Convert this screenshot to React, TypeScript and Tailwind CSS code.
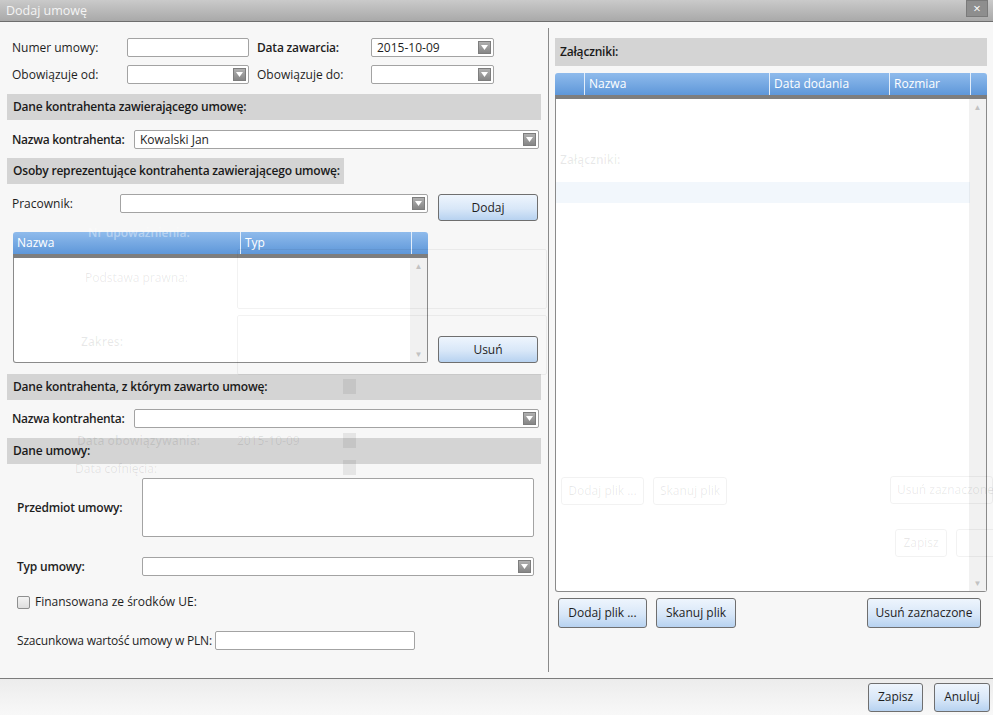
import React from 'react';

const Arrow: React.FC = () => (
  <div className="flex h-[13px] w-[13px] shrink-0 items-center justify-center border border-[#7d7d7d] bg-linear-to-b from-[#b0b0b0] to-[#868686]">
    <svg width="7" height="5" viewBox="0 0 7 5">
      <path d="M0 0 L7 0 L3.5 5 Z" fill="#ffffff" />
    </svg>
  </div>
);

const Combo: React.FC<{ className?: string; value?: string }> = ({ className = '', value = '' }) => (
  <div className={`flex h-[19px] shrink-0 items-center rounded-[2px] border border-[#a3a3a3] bg-white pl-[5px] pr-[2px] ${className}`}>
    <span className="flex-1 whitespace-nowrap text-[12px] leading-none text-[#1e1e1e]">{value}</span>
    <Arrow />
  </div>
);

const TextBox: React.FC<{ className?: string }> = ({ className = '' }) => (
  <div className={`shrink-0 rounded-[2px] border border-[#a3a3a3] bg-white ${className}`} />
);

const Btn: React.FC<{ className?: string; children: React.ReactNode }> = ({ className = '', children }) => (
  <button className={`flex shrink-0 items-center justify-center whitespace-nowrap rounded-[3px] border border-[#6f6f6f] bg-linear-to-b from-[#eef5fd] via-[#d8e7f8] via-55% to-[#b7d2f0] text-[12px] text-[#1e1e1e] ${className}`}>
    {children}
  </button>
);

const Section: React.FC<{ className?: string; children: React.ReactNode }> = ({ className = '', children }) => (
  <div className={`flex h-[26px] items-center whitespace-nowrap bg-[#d4d4d4] px-[6px] text-[12px] font-semibold tracking-[-0.2px] text-[#1a1a1a] ${className}`}>
    {children}
  </div>
);

interface Col {
  label: string;
  w: string;
}

const Grid: React.FC<{ cols: Col[]; className?: string }> = ({ cols, className = '' }) => (
  <div className={`flex flex-col ${className}`}>
    <div className="flex h-[22px] rounded-t-[3px] bg-linear-to-b from-[#8fbbec] to-[#5e97d9]">
      {cols.map((c, i) => (
        <div
          key={i}
          className={`${c.w} flex items-center border-l border-[#e3eefa] pl-[4px] text-[12px] text-white first:border-l-0 last:flex-1`}
        >
          {c.label}
        </div>
      ))}
    </div>
    <div className="h-[4px] bg-[#7e7e7e]" />
    <div className="flex flex-1 rounded-b-[3px] border border-t-0 border-[#8a8a8a] bg-white">
      <div className="flex-1" />
      <div className="flex w-[17px] flex-col items-center justify-between bg-[#f1f1f1] py-[4px] text-[8px] leading-none text-[#c2c2c2]">
        <span>▲</span>
        <span>▼</span>
      </div>
    </div>
  </div>
);

// faint image of the window lying behind this one
const Ghost: React.FC = () => (
  <div className="pointer-events-none absolute inset-0 text-[12px] text-black/[0.09]">
    <span className="absolute left-[88px] top-[224px] font-semibold text-white/40">Nr upoważnienia:</span>
    <span className="absolute left-[85px] top-[269px]">Podstawa prawna:</span>
    <span className="absolute left-[81px] top-[333px] font-semibold">Zakres:</span>
    <span className="absolute left-[77px] top-[432px] font-semibold">Data obowiązywania:</span>
    <span className="absolute left-[237px] top-[432px]">2015-10-09</span>
    <span className="absolute left-[75px] top-[460px]">Data cofnięcia:</span>
    <div className="absolute left-[343px] top-[379px] h-[15px] w-[13px] bg-black/[0.07]" />
    <div className="absolute left-[343px] top-[433px] h-[15px] w-[13px] bg-black/[0.07]" />
    <div className="absolute left-[343px] top-[460px] h-[15px] w-[13px] bg-black/[0.07]" />
    <div className="absolute left-[237px] top-[249px] h-[60px] w-[310px] rounded-[2px] border border-black/[0.05]" />
    <div className="absolute left-[237px] top-[315px] h-[60px] w-[310px] rounded-[2px] border border-black/[0.05]" />
    <span className="absolute left-[560px] top-[151px] font-semibold">Załączniki:</span>
    <div className="absolute left-[556px] top-[182px] h-[21px] w-[414px] bg-[#5e97d9]/[0.08]" />
    <div className="absolute left-[561px] top-[477px] flex h-[28px] w-[83px] items-center justify-center rounded-[3px] border border-black/[0.05]">Dodaj plik ...</div>
    <div className="absolute left-[653px] top-[477px] flex h-[28px] w-[74px] items-center justify-center rounded-[3px] border border-black/[0.05]">Skanuj plik</div>
    <div className="absolute left-[890px] top-[476px] flex h-[28px] w-[103px] items-center justify-start whitespace-nowrap rounded-[3px] border border-black/[0.05] pl-[6px]">Usuń zaznaczone</div>
    <div className="absolute left-[895px] top-[529px] flex h-[28px] w-[52px] items-center justify-center rounded-[3px] border border-black/[0.05]">Zapisz</div>
    <div className="absolute left-[956px] top-[529px] h-[28px] w-[50px] rounded-[3px] border border-black/[0.05]" />
  </div>
);

export default function App() {
  return (
    <div className="relative flex h-[715px] w-[993px] flex-col overflow-hidden bg-[#f7f7f7] font-['Open_Sans',sans-serif] text-[12px] text-[#1e1e1e]">
      {/* title bar */}
      <div className="flex h-[22px] shrink-0 items-start justify-between border-b border-[#6e6e6e] bg-linear-to-b from-[#cacaca] to-[#a9a9a9]">
        <span className="pl-[6px] pt-[2px] text-[12.5px] text-[#f4f4f4]">Dodaj umowę</span>
        <div className="mr-[5px] flex h-[17px] w-[22px] items-center justify-center border border-[#7a7a7a] bg-[#8e8e8e] text-[13px] leading-none text-white">
          ×
        </div>
      </div>

      {/* main */}
      <div className="flex flex-1">
        {/* left panel */}
        <div className="flex w-[548px] flex-col whitespace-nowrap pt-[16px]">
          <div className="flex h-[19px] items-center">
            <span className="w-[127px] shrink-0 pl-[12px]">Numer umowy:</span>
            <TextBox className="h-[19px] w-[122px]" />
            <span className="w-[122px] shrink-0 pl-[8px] font-semibold tracking-[-0.2px]">Data zawarcia:</span>
            <Combo className="w-[123px]" value="2015-10-09" />
          </div>
          <div className="mt-[8px] flex h-[19px] items-center">
            <span className="w-[127px] shrink-0 pl-[12px]">Obowiązuje od:</span>
            <Combo className="w-[122px]" />
            <span className="w-[122px] shrink-0 pl-[8px]">Obowiązuje do:</span>
            <Combo className="w-[123px]" />
          </div>

          <Section className="mx-[7px] mt-[10px]">Dane kontrahenta zawierającego umowę:</Section>
          <div className="mt-[10px] flex h-[19px] items-center">
            <span className="w-[134px] shrink-0 pl-[12px] font-semibold tracking-[-0.3px]">Nazwa kontrahenta:</span>
            <Combo className="w-[405px]" value="Kowalski Jan" />
          </div>

          <Section className="ml-[7px] mt-[9px] self-start pr-[4px]">Osoby reprezentujące kontrahenta zawierającego umowę:</Section>
          <div className="mt-[10px] flex items-start">
            <span className="w-[120px] shrink-0 pl-[12px] leading-[19px]">Pracownik:</span>
            <Combo className="w-[308px]" />
            <Btn className="ml-[10px] h-[27px] w-[100px]">Dodaj</Btn>
          </div>
          <div className="mt-[11px] flex items-end">
            <Grid
              className="ml-[13px] h-[131px] w-[415px]"
              cols={[
                { label: 'Nazwa', w: 'w-[227px]' },
                { label: 'Typ', w: 'w-[171px]' },
                { label: '', w: 'w-[17px]' },
              ]}
            />
            <Btn className="ml-[10px] h-[27px] w-[100px]">Usuń</Btn>
          </div>

          <Section className="mx-[7px] mt-[11px]">Dane kontrahenta, z którym zawarto umowę:</Section>
          <div className="mt-[9px] flex h-[19px] items-center">
            <span className="w-[134px] shrink-0 pl-[12px] font-semibold tracking-[-0.3px]">Nazwa kontrahenta:</span>
            <Combo className="w-[405px]" />
          </div>

          <Section className="mx-[7px] mt-[10px]">Dane umowy:</Section>
          <div className="mt-[14px] flex items-center">
            <span className="w-[142px] shrink-0 pl-[17px] font-semibold tracking-[-0.2px]">Przedmiot umowy:</span>
            <TextBox className="h-[59px] w-[392px]" />
          </div>
          <div className="mt-[20px] flex h-[19px] items-center">
            <span className="w-[142px] shrink-0 pl-[17px] font-semibold tracking-[-0.2px]">Typ umowy:</span>
            <Combo className="w-[392px]" />
          </div>
          <div className="mt-[19px] flex h-[14px] items-center pl-[17px]">
            <div className="h-[13px] w-[13px] rounded-[2px] border border-[#8e8f8f] bg-linear-to-b from-[#f4f4f4] to-[#dedede]" />
            <span className="ml-[5px]">Finansowana ze środków UE:</span>
          </div>
          <div className="mt-[22px] flex h-[19px] items-center">
            <span className="w-[215px] shrink-0 pl-[17px] tracking-[-0.2px]">Szacunkowa wartość umowy w PLN:</span>
            <TextBox className="h-[19px] w-[200px]" />
          </div>
        </div>

        {/* divider */}
        <div className="my-[6px] w-px bg-[#8a8a8a]" />

        {/* right panel */}
        <div className="flex flex-1 flex-col pl-[6px] pr-[6px] pt-[16px]">
          <Section className="h-[28px] pl-[5px]">Załączniki:</Section>
          <Grid
            className="mt-[7px] h-[519px]"
            cols={[
              { label: '', w: 'w-[29px]' },
              { label: 'Nazwa', w: 'w-[185px]' },
              { label: 'Data dodania', w: 'w-[120px]' },
              { label: 'Rozmiar', w: 'w-[81px]' },
              { label: '', w: 'w-[17px]' },
            ]}
          />
          <div className="mt-[6px] flex items-center">
            <Btn className="ml-[3px] h-[30px] w-[89px]">Dodaj plik ...</Btn>
            <Btn className="ml-[9px] h-[30px] w-[80px]">Skanuj plik</Btn>
            <Btn className="ml-auto mr-[6px] h-[30px] w-[114px]">Usuń zaznaczone</Btn>
          </div>
        </div>
      </div>

      {/* footer */}
      <div className="flex h-[37px] shrink-0 items-center justify-end gap-[11px] border-t border-[#7c7c7c] bg-linear-to-b from-[#ececec] to-[#f8f8f8] pr-[3px]">
        <Btn className="h-[29px] w-[55px]">Zapisz</Btn>
        <Btn className="h-[29px] w-[56px]">Anuluj</Btn>
      </div>

      <Ghost />
    </div>
  );
}
